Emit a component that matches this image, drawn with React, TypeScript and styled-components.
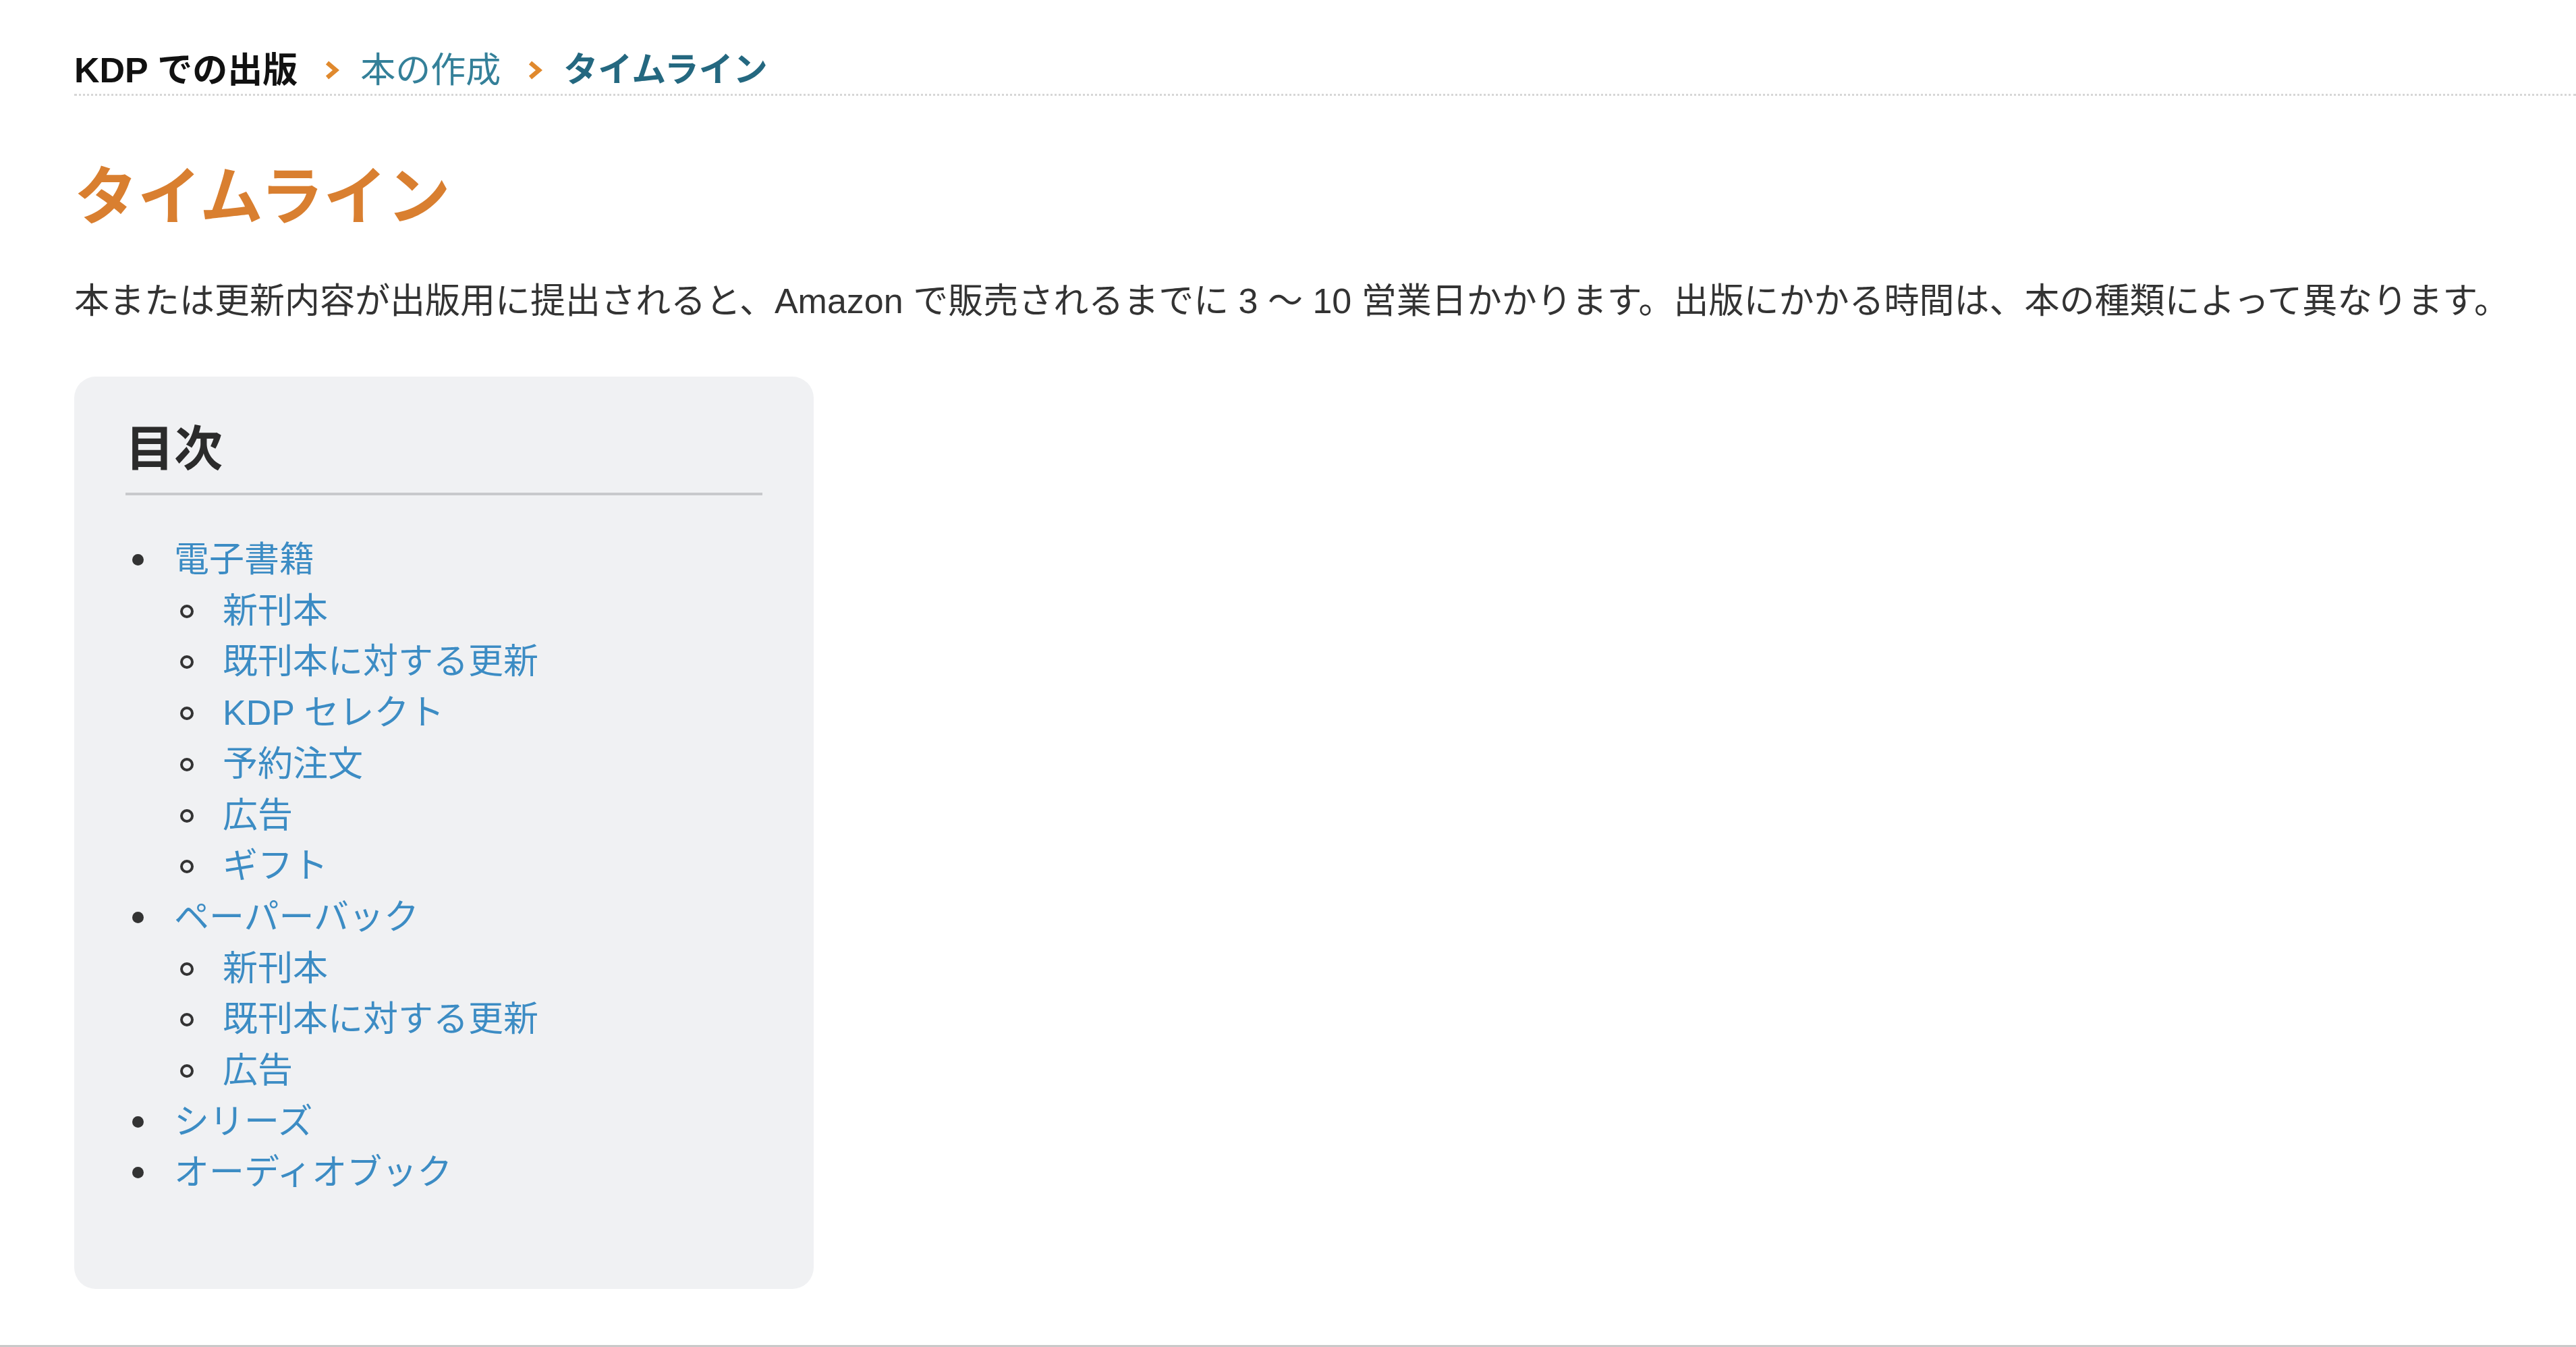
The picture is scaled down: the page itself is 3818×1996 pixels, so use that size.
import React from 'react';
import styled, { createGlobalStyle } from 'styled-components';

const GlobalStyle = createGlobalStyle`
  html, body {
    margin: 0;
    padding: 0;
    background: #ffffff;
  }
  body {
    font-family: "Liberation Sans", "Noto Sans CJK JP", sans-serif;
    color: #333333;
  }
`;

const Page = styled.div`
  min-height: 100vh;
  box-sizing: border-box;
  padding: 69px 0 0 110px;
  border-bottom: 3px solid #c9c9c9;
`;

const Breadcrumb = styled.nav`
  display: flex;
  align-items: center;
  height: 70px;
  font-size: 52px;
  line-height: 70px;
  border-bottom: 3px dotted #d6d6d6;
`;

type CrumbKind = 'root' | 'link' | 'current';

const Crumb = styled.span<{ $kind: CrumbKind }>`
  white-space: nowrap;
  font-size: ${(p) => (p.$kind === 'current' ? '51px' : '52px')};
  font-weight: ${(p) => (p.$kind === 'link' ? 400 : 700)};
  color: ${(p) => (p.$kind === 'root' ? '#111111' : p.$kind === 'link' ? '#348099' : '#246880')};
`;

const Chevron = styled.svg`
  display: block;
  width: 22px;
  height: 28px;
  margin: 0 31px 0 40px;
  flex-shrink: 0;
`;

const Title = styled.h1`
  margin: 91px 0 0;
  font-size: 94px;
  line-height: 120px;
  font-weight: 700;
  color: #d97f30;
`;

const Lead = styled.p`
  margin: 55px 0 0;
  font-size: 52px;
  line-height: 76px;
  color: #333333;
  white-space: nowrap;
`;

const Toc = styled.aside`
  margin-top: 74px;
  width: 1096px;
  box-sizing: border-box;
  padding: 62px 76px 80px;
  border-radius: 32px;
  background: #f0f1f3;
`;

const TocTitle = styled.h2`
  margin: 0;
  padding-bottom: 20px;
  font-size: 72px;
  line-height: 90px;
  font-weight: 700;
  color: #2b2b2b;
  border-bottom: 4px solid #c8c9cc;
`;

const TocList = styled.ul<{ $nested?: boolean }>`
  list-style: none;
  margin: ${(p) => (p.$nested ? '0' : '58px 0 54px')};
  padding-left: 72px;
`;

const TocItem = styled.li<{ $level: 1 | 2 }>`
  font-size: 52px;
  line-height: 75.7px;

  &::before {
    content: '';
    display: inline-block;
    box-sizing: border-box;
    border-radius: 50%;
    ${(p) =>
      p.$level === 1
        ? `
      width: 17px;
      height: 17px;
      margin: 0 45px 0 -62px;
      background: #333333;
      vertical-align: 9px;
    `
        : `
      width: 20px;
      height: 20px;
      margin: 0 43px 0 -63px;
      border: 4px solid #333333;
      vertical-align: 7px;
    `}
  }
`;

const TocLink = styled.a`
  color: #3c8cc4;
  text-decoration: none;
`;

function Arrow() {
  return (
    <Chevron viewBox="0 0 22 28" xmlns="http://www.w3.org/2000/svg">
      <polyline points="4,3 17,14 4,25" fill="none" stroke="#e0892d" strokeWidth="6.5" strokeLinejoin="miter" />
    </Chevron>
  );
}

type Entry = { label: string; children?: string[] };

const contents: Entry[] = [
  { label: '電子書籍', children: ['新刊本', '既刊本に対する更新', 'KDP セレクト', '予約注文', '広告', 'ギフト'] },
  { label: 'ペーパーバック', children: ['新刊本', '既刊本に対する更新', '広告'] },
  { label: 'シリーズ' },
  { label: 'オーディオブック' },
];

function App() {
  return (
    <>
      <GlobalStyle />
      <Page>
        <Breadcrumb>
          <Crumb $kind="root">KDP での出版</Crumb>
          <Arrow />
          <Crumb $kind="link">本の作成</Crumb>
          <Arrow />
          <Crumb $kind="current">タイムライン</Crumb>
        </Breadcrumb>

        <Title>タイムライン</Title>
        <Lead>
          本または更新内容が出版用に提出されると、Amazon で販売されるまでに 3 〜 10 営業日かかります。出版にかかる時間は、本の種類によって異なります。
        </Lead>

        <Toc>
          <TocTitle>目次</TocTitle>
          <TocList>
            {contents.map((entry) => (
              <TocItem $level={1} key={entry.label}>
                <TocLink href="#">{entry.label}</TocLink>
                {entry.children && (
                  <TocList $nested>
                    {entry.children.map((child) => (
                      <TocItem $level={2} key={child}>
                        <TocLink href="#">{child}</TocLink>
                      </TocItem>
                    ))}
                  </TocList>
                )}
              </TocItem>
            ))}
          </TocList>
        </Toc>
      </Page>
    </>
  );
}

export default App;
